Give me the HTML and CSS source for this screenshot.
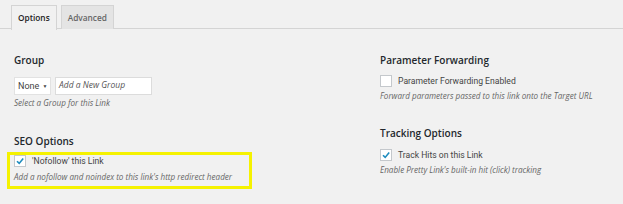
FILE: index.html
```html
<!DOCTYPE html>
<html>
<head>
<meta charset="utf-8">
<link rel="stylesheet" href="styles.css">
</head>
<body>
<div class="tabs">
  <div class="tab active">Options</div>
  <div class="tab">Advanced</div>
</div>
<div class="content">
  <div class="col left">
    <div class="section">
      <h3>Group</h3>
      <div class="group-row">
        <div class="select">None <span class="caret">&#9660;</span></div>
        <div class="input">Add a New Group</div>
      </div>
      <p class="desc">Select a Group for this Link</p>
    </div>
    <div class="section seo">
      <h3>SEO Options</h3>
      <div class="highlight">
        <label class="check"><span class="box checked"><svg viewBox="0 0 10 10" width="10" height="10"><path d="M2 5.2 L4.2 7.4 L8.2 2.4" fill="none" stroke="#1e8cbe" stroke-width="1.6"/></svg></span>'Nofollow' this Link</label>
        <p class="desc">Add a nofollow and noindex to this link's http redirect header</p>
      </div>
    </div>
  </div>
  <div class="col right">
    <div class="section">
      <h3>Parameter Forwarding</h3>
      <label class="check"><span class="box"></span>Parameter Forwarding Enabled</label>
      <p class="desc">Forward parameters passed to this link onto the Target URL</p>
    </div>
    <div class="section track">
      <h3>Tracking Options</h3>
      <label class="check"><span class="box checked"><svg viewBox="0 0 10 10" width="10" height="10"><path d="M2 5.2 L4.2 7.4 L8.2 2.4" fill="none" stroke="#1e8cbe" stroke-width="1.6"/></svg></span>Track Hits on this Link</label>
      <p class="desc">Enable Pretty Link's built-in hit (click) tracking</p>
    </div>
  </div>
</div>
</body>
</html>
```
FILE: styles.css
```css
html, body {
  margin: 0;
  padding: 0;
  background: #f1f1f1;
  font-family: "Open Sans", "Noto Sans", sans-serif;
  color: #444;
  width: 623px;
  height: 204px;
  overflow: hidden;
}
.tabs {
  display: flex;
  gap: 4px;
  padding: 5px 0 0 11px;
  border-bottom: 1px solid #d4d4d4;
  height: 23px;
}
.tab {
  font-size: 8.3px;
  font-weight: 600;
  color: #666;
  background: #e4e4e4;
  border: 1px solid #d4d4d4;
  border-bottom: none;
  padding: 0 6px;
  line-height: 23px;
  height: 23px;
}
.tab.active {
  background: #f1f1f1;
  color: #222;
  height: 24px;
}
.content {
  display: grid;
  grid-template-columns: 380px 1fr;
}
.col.left { padding-left: 14px; }
h3 {
  margin: 0;
  font-size: 10px;
  font-weight: 600;
  color: #23282d;
  line-height: 16px;
}
.left .section:first-child,
.right .section:first-child { padding-top: 23px; }
.group-row {
  display: flex;
  gap: 4px;
  margin-top: 9px;
}
.select {
  width: 37px;
  height: 18px;
  box-sizing: border-box;
  background: #fff;
  border: 1px solid #e2e2e2;
  font-family: Roboto, "Open Sans", sans-serif;
  font-size: 9px;
  line-height: 16px;
  padding-left: 3px;
  color: #444;
}
.caret { font-size: 5px; vertical-align: 1px; margin-left: 1px; }
.input {
  width: 97px;
  height: 18px;
  box-sizing: border-box;
  background: #fff;
  border: 1px solid #dcdcdc;
  font-size: 8.5px;
  font-style: italic;
  line-height: 14px;
  padding-left: 3px;
  color: #555;
}
.desc {
  margin: 2px 0 0;
  font-size: 8.1px;
  font-style: italic;
  color: #666;
  line-height: 12px;
  white-space: nowrap;
}
.seo { margin-top: 24px; margin-left: -7px; }
.seo h3 { margin-left: 7px; }
.highlight {
  margin-top: 3px;
  width: 245px;
  box-sizing: border-box;
  border: 3px solid #f5f200;
  padding: 0 4px 3px 4px;
}
.highlight .desc { margin-top: 4px; }
.check {
  display: flex;
  align-items: center;
  gap: 6px;
  font-family: Roboto, "Open Sans", sans-serif;
  font-size: 8.6px;
  color: #444;
  line-height: 12px;
  margin-top: 7px;
}
.highlight .check { margin-top: 0; }
.right .desc { margin-top: 3px; }
.box {
  width: 10px;
  height: 10px;
  background: #fff;
  border: 1px solid #c4c8cc;
  display: inline-flex;
  align-items: center;
  justify-content: center;
  flex: none;
}
.box svg { display: block; }
.track { margin-top: 23px; }
.track .check { margin-top: 8px; }
```
